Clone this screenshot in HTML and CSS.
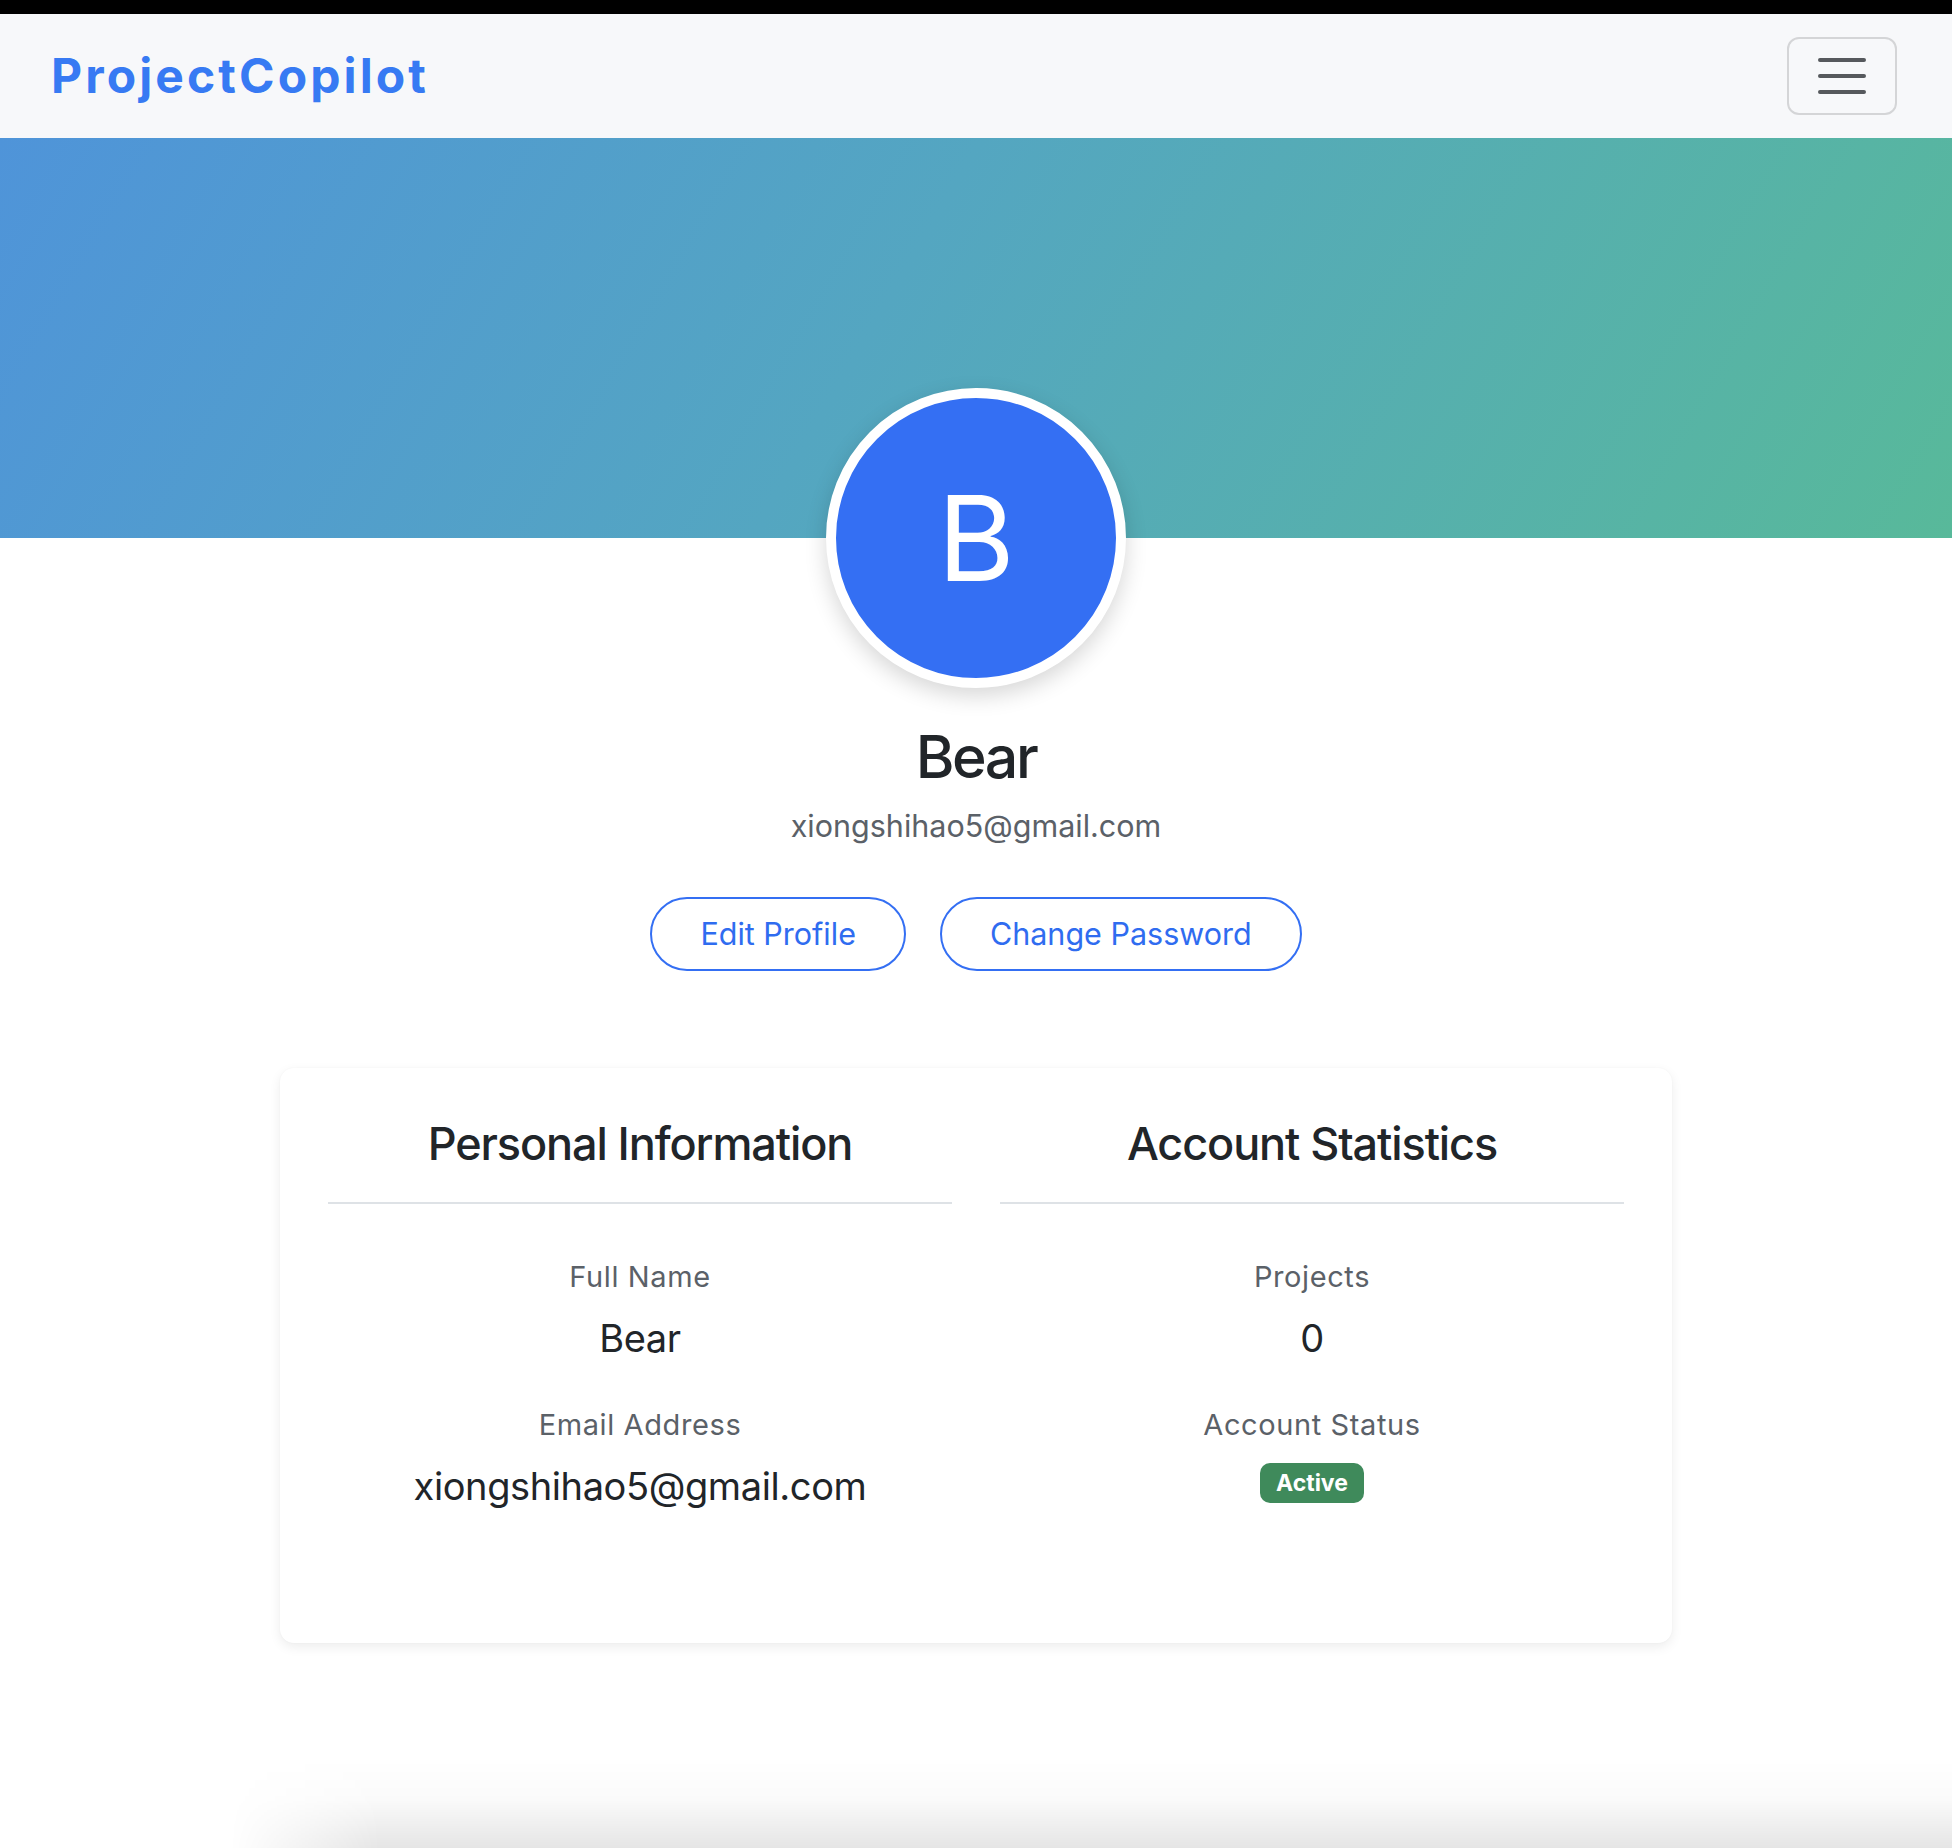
FILE: index.html
```html
<!DOCTYPE html>
<html lang="en">
<head>
<meta charset="utf-8">
<title>Profile - ProjectCopilot</title>
<link rel="stylesheet" href="styles.css">
</head>
<body>
<div class="topbar"></div>
<nav class="navbar">
  <a class="brand" href="#">ProjectCopilot</a>
  <button class="toggler" type="button" aria-label="Toggle navigation">
    <svg width="48" height="36" viewBox="0 0 48 36" aria-hidden="true">
      <path d="M2 2H46M2 18H46M2 34H46" stroke="#56595d" stroke-width="4" stroke-linecap="round"/>
    </svg>
  </button>
</nav>
<header class="hero"></header>
<section class="profile">
  <div class="avatar">B</div>
  <h2 class="name">Bear</h2>
  <p class="email">xiongshihao5@gmail.com</p>
  <div class="actions">
    <button class="btn" type="button">Edit Profile</button>
    <button class="btn" type="button">Change Password</button>
  </div>
</section>
<main class="card">
  <div class="col">
    <h4 class="col-title">Personal Information</h4>
    <div class="item">
      <div class="label">Full Name</div>
      <div class="value">Bear</div>
    </div>
    <div class="item">
      <div class="label">Email Address</div>
      <div class="value">xiongshihao5@gmail.com</div>
    </div>
  </div>
  <div class="col">
    <h4 class="col-title">Account Statistics</h4>
    <div class="item">
      <div class="label">Projects</div>
      <div class="value">0</div>
    </div>
    <div class="item">
      <div class="label">Account Status</div>
      <div class="value value-badge"><span class="badge">Active</span></div>
    </div>
  </div>
</main>
<div class="bottom-shade"></div>
</body>
</html>
```

FILE: styles.css
```css
* {
  box-sizing: border-box;
}

html, body {
  margin: 0;
  padding: 0;
}

body {
  font-family: Inter, "Noto Sans", "Liberation Sans", sans-serif;
  color: #212529;
  background: #ffffff;
  width: 1952px;
  height: 1848px;
  overflow: hidden;
}

.topbar {
  height: 14px;
  background: #000000;
}

.navbar {
  height: 124px;
  background: #f7f8fa;
  display: flex;
  align-items: center;
  justify-content: space-between;
  padding: 0 55px 0 51px;
}

.brand {
  font-size: 48px;
  font-weight: 700;
  letter-spacing: 3.1px;
  color: #377af3;
  text-decoration: none;
  line-height: 1.2;
}

.toggler {
  width: 110px;
  height: 78px;
  border: 2px solid #d4d5d7;
  border-radius: 12px;
  background: transparent;
  display: flex;
  align-items: center;
  justify-content: center;
  padding: 0;
}

.hero {
  height: 400px;
  background: linear-gradient(120deg, #4f94d9 0%, #54a6c1 45%, #58b99a 100%);
}

.profile {
  display: flex;
  flex-direction: column;
  align-items: center;
}

.avatar {
  width: 300px;
  height: 300px;
  margin-top: -150px;
  border-radius: 50%;
  border: 10px solid #ffffff;
  background: #346ff3;
  color: #ffffff;
  font-size: 118px;
  font-weight: 400;
  display: flex;
  align-items: center;
  justify-content: center;
  box-shadow: 0 8px 22px rgba(0, 0, 0, 0.16);
  line-height: 1;
}

.name {
  margin: 33px 0 0;
  font-size: 59px;
  font-weight: 500;
  line-height: 72px;
  letter-spacing: -2.4px;
}

.email {
  margin: 9px 0 0;
  font-size: 30.5px;
  line-height: 48px;
  color: #5b6168;
}

.actions {
  margin-top: 47px;
  display: flex;
  gap: 34px;
}

.btn {
  font-family: inherit;
  font-size: 30.5px;
  line-height: 48px;
  padding: 11px 48px;
  border: 2px solid #346ff3;
  border-radius: 999px;
  background: #ffffff;
  color: #2f6cf0;
}

.card {
  width: 1392px;
  margin: 97px auto 0;
  padding: 48px 48px 127px;
  border-radius: 14px;
  background: #ffffff;
  box-shadow: 0 4px 12px rgba(0, 0, 0, 0.075), 0 0 2px rgba(0, 0, 0, 0.04);
  display: grid;
  grid-template-columns: 1fr 1fr;
  gap: 48px;
}

.col {
  text-align: center;
}

.col-title {
  margin: 0 0 52px;
  font-size: 45px;
  font-weight: 500;
  line-height: 56px;
  padding-bottom: 30px;
  border-bottom: 2px solid #dee2e6;
  letter-spacing: -1.1px;
}

.item + .item {
  margin-top: 36px;
}

.label {
  font-size: 29px;
  line-height: 42px;
  color: #5b6168;
  margin-bottom: 10px;
  letter-spacing: 0.6px;
}

.value {
  font-size: 38px;
  line-height: 60px;
  color: #212529;
  letter-spacing: -0.4px;
}

.value-badge {
  height: 60px;
  display: flex;
  align-items: center;
  justify-content: center;
}

.badge {
  display: inline-block;
  margin-top: -7px;
  background: #3f8a5b;
  color: #ffffff;
  font-size: 23px;
  font-weight: 700;
  line-height: 40px;
  padding: 0 16px;
  border-radius: 10px;
  letter-spacing: 0;
}

.bottom-shade {
  height: 88px;
  margin: 117px 0 0 230px;
  background: linear-gradient(to bottom, rgba(0, 0, 0, 0) 0%, rgba(0, 0, 0, 0.02) 45%, rgba(0, 0, 0, 0.1) 100%);
  -webkit-mask-image: linear-gradient(to right, transparent 0, #000 150px);
  mask-image: linear-gradient(to right, transparent 0, #000 150px);
}
```
